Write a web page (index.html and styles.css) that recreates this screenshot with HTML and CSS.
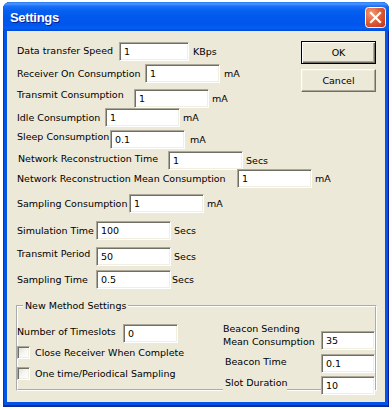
FILE: index.html
```
<!DOCTYPE html>
<html>
<head>
<meta charset="utf-8">
<title>Settings</title>
<link rel="stylesheet" href="styles.css">
</head>
<body>
<div class="window">
  <div class="titlebar">
    <span class="title">Settings</span>
    <span class="close">
      <svg width="21" height="21" viewBox="0 0 21 21">
        <defs>
          <radialGradient id="cg" cx="0.3" cy="0.3" r="0.9">
            <stop offset="0" stop-color="#F3A07C"/>
            <stop offset="0.45" stop-color="#E0623A"/>
            <stop offset="1" stop-color="#C2371A"/>
          </radialGradient>
        </defs>
        <rect x="0.5" y="0.5" width="20" height="20" rx="3" fill="url(#cg)" stroke="#fff"/>
        <path d="M6 6 L15 15 M15 6 L6 15" stroke="#fff" stroke-width="2.2" stroke-linecap="square"/>
      </svg>
    </span>
  </div>
  <div class="client">
    <div class="top">
      <div class="toprows">
        <div class="row r1"><span class="lbl">Data transfer Speed</span><input class="field" type="text" value="1"><span class="unit">KBps</span></div>
        <div class="row r2"><span class="lbl">Receiver On Consumption</span><input class="field" type="text" value="1"><span class="unit">mA</span></div>
        <div class="row r3"><span class="lbl">Transmit Consumption</span><input class="field" type="text" value="1"><span class="unit">mA</span></div>
      </div>
      <div class="buttons">
        <div class="btn default">OK</div>
        <div class="btn">Cancel</div>
      </div>
    </div>
    <div class="row r4"><span class="lbl">Idle Consumption</span><input class="field" type="text" value="1"><span class="unit">mA</span></div>
    <div class="row r5"><span class="lbl">Sleep Consumption</span><input class="field" type="text" value="0.1"><span class="unit">mA</span></div>
    <div class="row r6"><span class="lbl">Network Reconstruction Time</span><input class="field" type="text" value="1"><span class="unit">Secs</span></div>
    <div class="row r7"><span class="lbl">Network Reconstruction Mean Consumption</span><input class="field" type="text" value="1"><span class="unit">mA</span></div>
    <div class="row r8"><span class="lbl">Sampling Consumption</span><input class="field" type="text" value="1"><span class="unit">mA</span></div>
    <div class="row r9"><span class="lbl">Simulation Time</span><input class="field" type="text" value="100"><span class="unit">Secs</span></div>
    <div class="row r10"><span class="lbl">Transmit Period</span><input class="field" type="text" value="50"><span class="unit">Secs</span></div>
    <div class="row r11"><span class="lbl">Sampling Time</span><input class="field" type="text" value="0.5"><span class="unit">Secs</span></div>

    <fieldset class="group">
      <legend>New Method Settings</legend>
      <div class="gcols">
        <div class="gleft">
          <div class="row nrow"><span class="lbl">Number of Timeslots</span><input class="field small" type="text" value="0"></div>
          <div class="crow c1"><span class="check"></span><span class="ctext">Close Receiver When Complete</span></div>
          <div class="crow c2"><span class="check"></span><span class="ctext">One time/Periodical Sampling</span></div>
        </div>
        <div class="gright">
          <div class="grow ga"><span class="glbl">Beacon Sending<br>Mean Consumption</span><input class="field small" type="text" value="35"></div>
          <div class="grow gb"><span class="glbl">Beacon Time</span><input class="field small" type="text" value="0.1"></div>
          <div class="grow gc"><span class="glbl"><span class="slot">Slot Duration</span></span><input class="field small" type="text" value="10"></div>
        </div>
      </div>
    </fieldset>
  </div>
</div>
</body>
</html>
```
FILE: styles.css
```
html, body {
  margin: 0;
  padding: 0;
  background: #ffffff;
}

body {
  font-family: "DejaVu Sans", sans-serif;
  font-size: 9.5px;
  color: #000;
}

.window {
  margin: 2px 0 0 3px;
  width: 386px;
  height: 405px;
  box-sizing: border-box;
  display: flex;
  flex-direction: column;
  border-radius: 7px 7px 0 0;
  background: #0553E4;
  box-shadow: inset 1px 0 #0831D9, inset -1px 0 #001EA0, inset 0 -2px #0A2C9E;
}

.titlebar {
  height: 29px;
  flex: none;
  display: flex;
  align-items: center;
  justify-content: space-between;
  padding: 0 3px 0 7px;
  border-radius: 7px 7px 0 0;
  background: linear-gradient(to bottom,
    #2B7BF5 0%, #4A97FF 7%, #1C6FF8 14%, #0560F0 30%,
    #0058EE 55%, #0056EB 80%, #0060F5 90%, #0049D8 100%);
}

.title {
  font-family: "Liberation Sans", "DejaVu Sans", sans-serif;
  font-weight: bold;
  font-size: 13px;
  letter-spacing: -0.3px;
  color: #fff;
  text-shadow: 1px 1px 0 #0A1E8C;
  padding-top: 2px;
}

.close {
  display: flex;
  width: 21px;
  height: 21px;
  margin-top: 2px;
}

.client {
  flex: 1;
  margin: 0 4px 5px 4px;
  background: #ECE9D8;
  padding: 10px 9px 0 10px;
}

.top {
  display: flex;
  justify-content: space-between;
  align-items: flex-start;
}

.buttons {
  display: flex;
  flex-direction: column;
  gap: 5px;
}

.btn {
  width: 75px;
  height: 23px;
  box-sizing: border-box;
  display: flex;
  align-items: center;
  justify-content: center;
  background: #ECE9D8;
  border: 1px solid;
  border-color: #fff #716F64 #716F64 #fff;
  box-shadow: inset -1px -1px #ACA899, inset 1px 1px #F1EFE2;
}

.btn.default {
  border-color: #000;
  box-shadow: inset 1px 1px #fff, inset -1px -1px #716F64, inset -2px -2px #ACA899;
}

.row {
  display: flex;
  align-items: center;
  height: 19px;
}

.lbl {
  white-space: nowrap;
  flex: none;
  width: var(--lw);
  margin-bottom: var(--lo, 0px);
}

.field {
  box-sizing: border-box;
  width: 75px;
  height: 19px;
  margin: 0;
  flex: none;
  padding: 0 0 0 4px;
  font: inherit;
  color: #000;
  background: #fff;
  border: 1px solid;
  border-color: #ACA899 #fff #fff #ACA899;
  box-shadow: inset 1px 1px #716F64, inset -1px -1px #F1EFE2;
  outline: none;
}

.unit {
  margin-left: var(--ug, 3px);
  white-space: nowrap;
}

.r1 { --lw: 102px; --lo: 2px; --ug: 4px; margin-top: 1px; }
.r1 .field { width: 70px; }
.r2 { --lw: 128px; --ug: 4px; margin-top: 3px; }
.r3 { --lw: 117px; --lo: 8px; margin-top: 6px; }
.r4 { --lw: 88px; }
.r5 { --lw: 93px; --lo: 6px; --ug: 5px; margin-top: 3px; }
.r6 { --lw: 150px; --lo: 4px; margin-top: 2px; padding-left: 1px; }
.r7 { --lw: 220px; margin-top: -1px; }
.r8 { --lw: 112px; margin-top: 6px; }
.r9 { --lw: 79px; margin-top: 8px; }
.r10 { --lw: 79px; --lo: 6px; margin-top: 7px; }
.r11 { --lw: 79px; --ug: 1px; margin-top: 4px; }

.group {
  margin: 11px -1px 0 -1px;
  padding: 0;
  min-width: 0;
  height: 91px;
  box-sizing: border-box;
  border: 2px groove #fff;
}

.group legend {
  margin-left: 5px;
  padding: 0 2px;
  line-height: 12px;
}

.gcols {
  display: flex;
  justify-content: space-between;
  align-items: flex-start;
}

.gleft {
  margin-left: -1px;
}

.nrow { --lw: 106px; --lo: 4px; margin-top: 12px; }
.small { width: 55px; }

.crow {
  display: flex;
  align-items: center;
  height: 13px;
}

.c1 { margin-top: 3px; }
.c2 { margin-top: 8px; }

.check {
  width: 13px;
  height: 13px;
  box-sizing: border-box;
  flex: none;
  background: linear-gradient(135deg, #DCDBD5 0%, #F6F6F4 50%, #fff 100%);
  border: 1px solid;
  border-color: #ACA899 #fff #fff #ACA899;
  box-shadow: inset 1px 1px #716F64, inset -1px -1px #F1EFE2;
}

.ctext {
  margin-left: 5px;
  white-space: nowrap;
}

.gright {
  width: 152px;
}

.grow {
  display: flex;
  align-items: flex-start;
}

.glbl {
  width: 98px;
  flex: none;
  white-space: nowrap;
  box-sizing: border-box;
}

.grow .small { width: 54px; }

.ga { margin-top: 10px; }
.ga .glbl { line-height: 13px; }
.ga .field { margin-top: 9px; }

.gb { margin-top: 4px; }
.gb .glbl { line-height: 12px; margin-top: 2px; padding-left: 2px; }

.gc { margin-top: 3px; }
.gc .glbl { line-height: 12px; margin-top: 1px; }

.slot {
  display: inline-block;
  background: #ECE9D8;
  padding: 0 2px 2px 2px;
  width: 64px;
  box-sizing: border-box;
}
```
